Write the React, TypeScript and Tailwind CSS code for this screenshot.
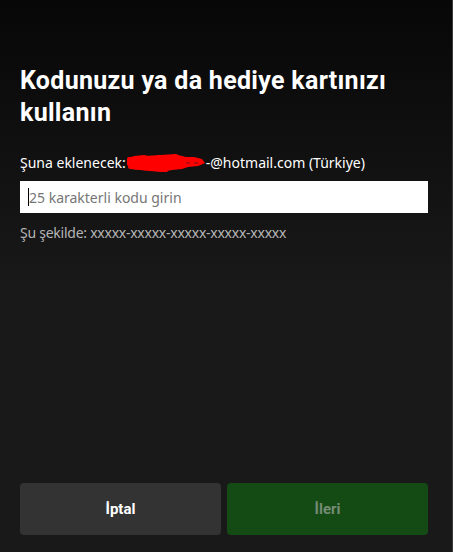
import React from 'react';

// Redaction scribble drawn over the e-mail's local part
function Scribble() {
  return (
    <svg width="80" height="20" viewBox="0 0 80 20" className="inline-block shrink-0">
      <polygon
        points="1,7 8,3 18,2 26,4 34,2 44,3 52,2 60,4 68,4 76,6 79,10 72,13 62,14 56,16 46,17 36,19 24,18 14,17 6,16 1,12"
        fill="#ff0000"
      />
      <path d="M3 6 L50 3 M4 14 L40 17 M30 14 L74 10" stroke="#ff0000" strokeWidth="4" strokeLinecap="round" />
      <path d="M60 10 L64 10 M68 10 L72 10" stroke="#7a1010" strokeWidth="1" />
    </svg>
  );
}

export default function App() {
  return (
    <div
      className="w-[453px] h-[552px] flex flex-col pl-5 pr-[24px] border-r border-[#3a3a3a] bg-[linear-gradient(to_bottom,#070707_0px,#191919_290px,#191919_100%)] text-white"
      style={{ fontFamily: '"Noto Sans", "Liberation Sans", sans-serif' }}
    >
      <h1
        className="mt-[65px] text-[25px] leading-[32px] font-bold tracking-[0.3px]"
        style={{ fontFamily: 'Roboto, "Liberation Sans", sans-serif' }}
      >
        Kodunuzu ya da hediye kartınızı kullanın
      </h1>

      <p className="mt-[24px] text-[14px] leading-[20px] text-white whitespace-nowrap flex items-center">
        <span>Şuna eklenecek:</span>
        <Scribble />
        <span>-@hotmail.com (Türkiye)</span>
      </p>

      <div className="mt-[8px] h-[32px] bg-white flex items-center px-[8px]">
        <span className="w-px h-[18px] bg-black" />
        <span className="text-[14px] text-[#767676]">25 karakterli kodu girin</span>
      </div>

      <p className="mt-[10px] text-[14px] leading-[20px] text-[#b5b5b5] tracking-[-0.25px]">
        Şu şekilde: xxxxx-xxxxx-xxxxx-xxxxx-xxxxx
      </p>

      <div className="mt-auto mb-[17px] grid grid-cols-2 gap-[6px]">
        <button
          className="h-[52px] rounded-[4px] bg-[#333333] text-[15px] font-bold text-white"
          style={{ fontFamily: 'Roboto, sans-serif' }}
        >
          İptal
        </button>
        <button
          className="h-[52px] rounded-[4px] bg-[#144a14] text-[15px] font-bold text-[#748b74]"
          style={{ fontFamily: 'Roboto, sans-serif' }}
        >
          İleri
        </button>
      </div>
    </div>
  );
}
